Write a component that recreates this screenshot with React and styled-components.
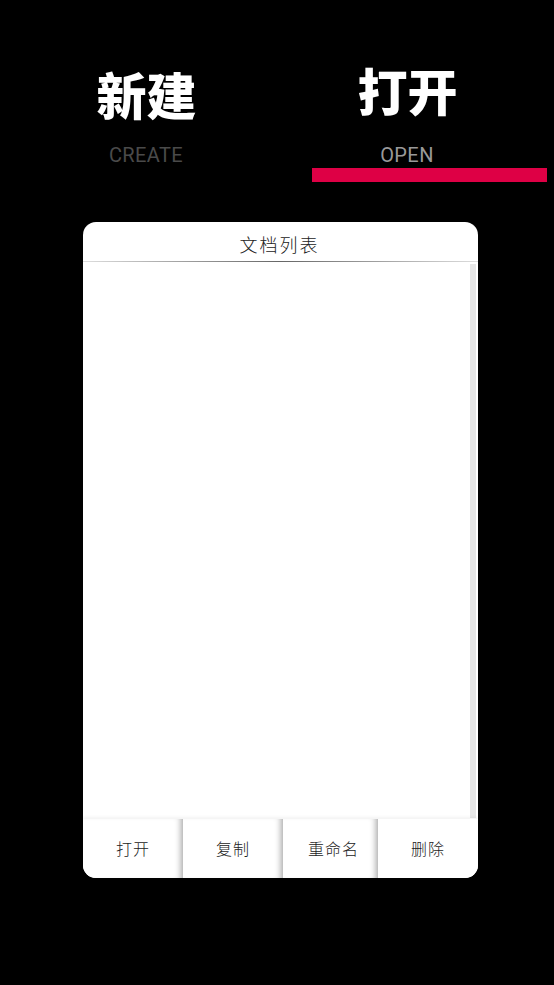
import React from "react";
import styled, { createGlobalStyle } from "styled-components";

const GlobalStyle = createGlobalStyle`
  html, body {
    margin: 0;
    padding: 0;
    background: #000;
  }
  * {
    box-sizing: border-box;
  }
`;

const Page = styled.div`
  display: flex;
  flex-direction: column;
  width: 554px;
  height: 985px;
  overflow: hidden;
  background: #000;
  font-family: "Noto Sans CJK SC", sans-serif;
`;

const Tabs = styled.div`
  display: flex;
  align-items: flex-start;
  gap: 71px;
  height: 222px;
  padding: 58px 0 0 51px;
`;

const Tab = styled.div`
  display: flex;
  flex-direction: column;
  width: ${(p) => (p.$active ? "235px" : "190px")};
`;

const TabTitle = styled.div`
  width: 190px;
  height: 70px;
  margin-top: ${(p) => (p.$active ? "-4px" : "0")};
  margin-bottom: ${(p) => (p.$active ? "4px" : "0")};
  padding-left: 1px;
  color: #fff;
  font-size: 50px;
  font-weight: 900;
  line-height: 70px;
  text-align: center;
`;

const TabLabel = styled.div`
  width: 190px;
  margin-top: 14px;
  color: ${(p) => (p.$active ? "#999" : "#4a4a4a")};
  font-family: Roboto, sans-serif;
  font-size: 20px;
  letter-spacing: 0.4px;
  line-height: 26px;
  text-align: center;
`;

const TabBar = styled.div`
  height: 14px;
  background: #de0045;
`;

const Card = styled.section`
  display: flex;
  flex-direction: column;
  width: 395px;
  height: 656px;
  margin-left: 83px;
  border-radius: 13px;
  overflow: hidden;
  background: #fff;
`;

const CardHeader = styled.header`
  flex: none;
  position: relative;
  height: 40px;
  padding-right: 2px;
  color: #222;
  font-size: 18px;
  font-weight: 300;
  letter-spacing: 2px;
  line-height: 44px;
  text-align: center;

  &::after {
    content: "";
    position: absolute;
    left: 0;
    right: 0;
    bottom: 0;
    height: 1px;
    background: linear-gradient(to right, #ddd, #666 50%, #ddd);
  }
`;

const DocList = styled.div`
  flex: 1;
  display: flex;
  justify-content: flex-end;
  padding: 2px 2px 1px 0;
`;

const ScrollTrack = styled.div`
  width: 6px;
  background: #e6e6e6;
`;

const Actions = styled.div`
  flex: none;
  display: flex;
  height: 59px;
  box-shadow: 0 -2px 3px rgba(0, 0, 0, 0.05);
`;

const ActionButton = styled.button`
  flex: none;
  width: ${(p) => p.$width}px;
  height: 100%;
  padding: 0 0 2px ${(p) => p.$inset || 0}px;
  border: 0;
  background: #fff;
  color: #222;
  font-family: inherit;
  font-size: 16px;
  font-weight: 300;
  letter-spacing: 1px;
  box-shadow: inset -7px 0 6px -5px rgba(0, 0, 0, 0.35);

  &:last-child {
    box-shadow: none;
  }
`;

const actions = [
  { label: "打开", width: 100 },
  { label: "复制", width: 100 },
  { label: "重命名", width: 95, inset: 6 },
  { label: "删除", width: 100 },
];

export default function App() {
  return (
    <Page>
      <GlobalStyle />
      <Tabs>
        <Tab>
          <TabTitle>新建</TabTitle>
          <TabLabel>CREATE</TabLabel>
        </Tab>
        <Tab $active>
          <TabTitle $active>打开</TabTitle>
          <TabLabel $active>OPEN</TabLabel>
          <TabBar />
        </Tab>
      </Tabs>
      <Card>
        <CardHeader>文档列表</CardHeader>
        <DocList>
          <ScrollTrack />
        </DocList>
        <Actions>
          {actions.map((a) => (
            <ActionButton key={a.label} $width={a.width} $inset={a.inset}>
              {a.label}
            </ActionButton>
          ))}
        </Actions>
      </Card>
    </Page>
  );
}
